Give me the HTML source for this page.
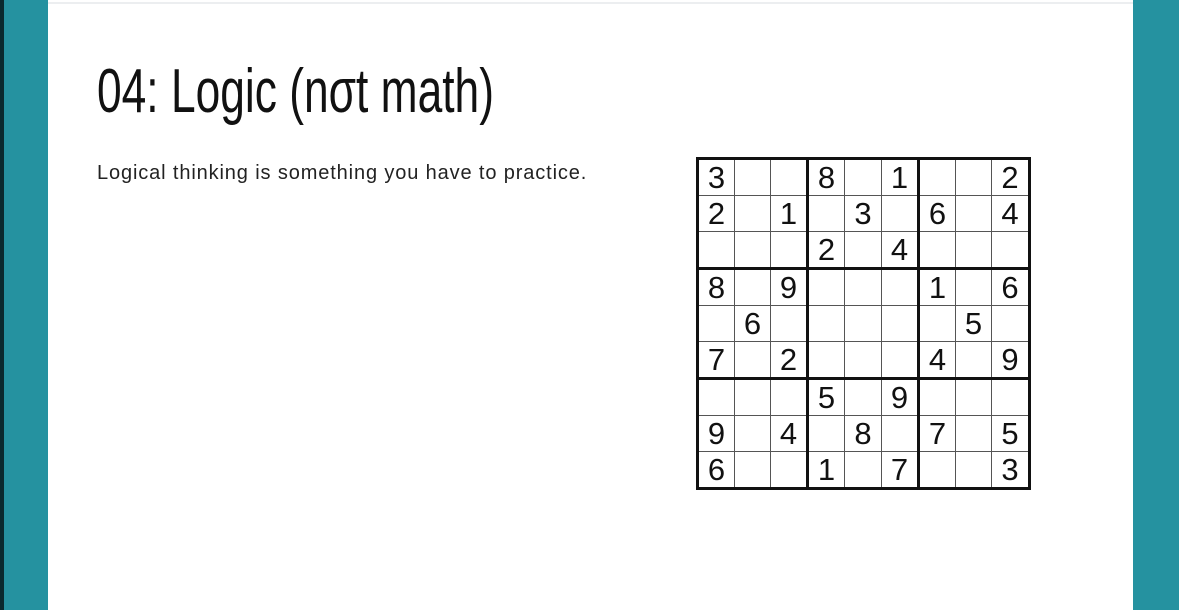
<!DOCTYPE html>
<html><head><meta charset="utf-8"><style>
html,body{margin:0;padding:0;width:1179px;height:610px;overflow:hidden;background:#fff;font-family:"Liberation Sans",sans-serif}
.l{position:absolute;left:0;top:0;width:48px;height:610px;background:#2592a0}
.lb{position:absolute;left:0;top:0;width:4px;height:610px;background:#0a2a2e}
.r{position:absolute;left:1133px;top:0;width:46px;height:610px;background:#2592a0}
.top{position:absolute;left:48px;top:2px;width:1085px;height:2px;background:#eceef0}
h1{position:absolute;left:97px;top:52px;margin:0;font-weight:normal;font-size:62px;line-height:80px;color:#111;transform:scaleX(0.715);transform-origin:0 0;white-space:nowrap}
p{position:absolute;left:97px;top:162px;margin:0;font-size:20px;letter-spacing:0.87px;color:#222;white-space:nowrap}
table{position:absolute;left:696px;top:157px;border-collapse:collapse;border:3px solid #111}
td{width:35px;height:35px;padding:0;border:1px solid #555;text-align:center;font-size:31px;line-height:35px;color:#111}
td.b3{border-right:3px solid #111}
tr.b3 td{border-bottom:3px solid #111}
td.w{width:36px}
</style></head><body>
<div class="l"></div><div class="lb"></div><div class="r"></div><div class="top"></div>
<h1>04: Logic (nσt math)</h1>
<p>Logical thinking is something you have to practice.</p>
<table>
<tr><td>3</td><td></td><td class="b3"></td><td>8</td><td class="w"></td><td class="b3">1</td><td></td><td></td><td class="w">2</td></tr>
<tr><td>2</td><td></td><td class="b3">1</td><td></td><td>3</td><td class="b3"></td><td>6</td><td></td><td>4</td></tr>
<tr class="b3"><td></td><td></td><td class="b3"></td><td>2</td><td></td><td class="b3">4</td><td></td><td></td><td></td></tr>
<tr><td>8</td><td></td><td class="b3">9</td><td></td><td></td><td class="b3"></td><td>1</td><td></td><td>6</td></tr>
<tr><td></td><td>6</td><td class="b3"></td><td></td><td></td><td class="b3"></td><td></td><td>5</td><td></td></tr>
<tr class="b3"><td>7</td><td></td><td class="b3">2</td><td></td><td></td><td class="b3"></td><td>4</td><td></td><td>9</td></tr>
<tr><td></td><td></td><td class="b3"></td><td>5</td><td></td><td class="b3">9</td><td></td><td></td><td></td></tr>
<tr><td>9</td><td></td><td class="b3">4</td><td></td><td>8</td><td class="b3"></td><td>7</td><td></td><td>5</td></tr>
<tr><td>6</td><td></td><td class="b3"></td><td>1</td><td></td><td class="b3">7</td><td></td><td></td><td>3</td></tr>
</table>
</body></html>
